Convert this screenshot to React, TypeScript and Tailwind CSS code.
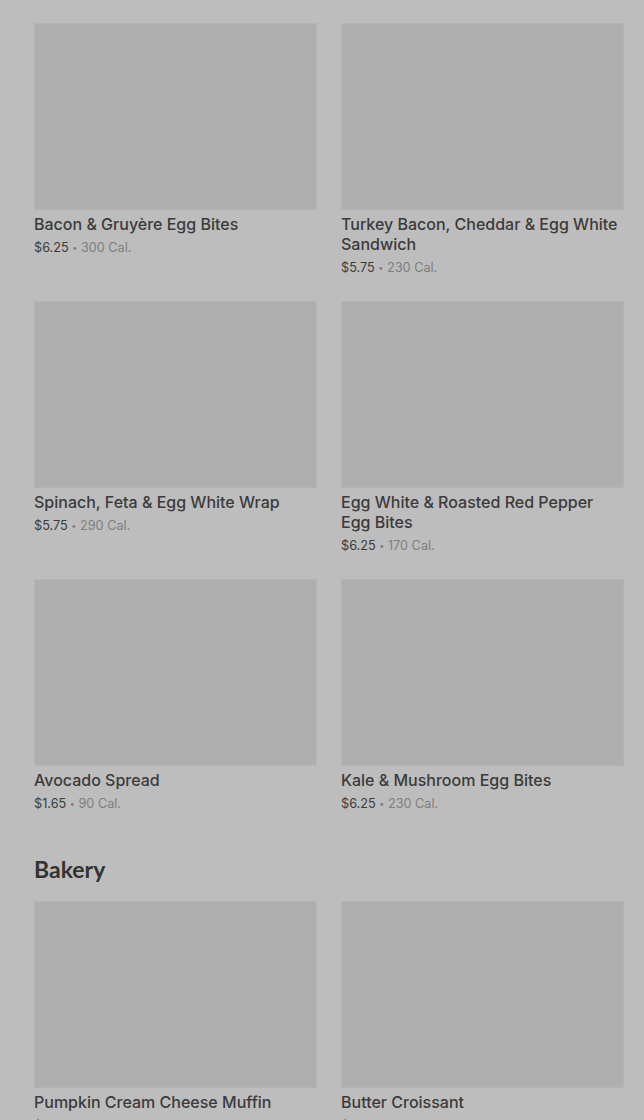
import React from 'react';

type Item = { name: string; price: string; cal: string };

const breakfast: Item[] = [
  { name: 'Bacon & Gruyère Egg Bites', price: '$6.25', cal: '300 Cal.' },
  { name: 'Turkey Bacon, Cheddar & Egg White Sandwich', price: '$5.75', cal: '230 Cal.' },
  { name: 'Spinach, Feta & Egg White Wrap', price: '$5.75', cal: '290 Cal.' },
  { name: 'Egg White & Roasted Red Pepper Egg Bites', price: '$6.25', cal: '170 Cal.' },
  { name: 'Avocado Spread', price: '$1.65', cal: '90 Cal.' },
  { name: 'Kale & Mushroom Egg Bites', price: '$6.25', cal: '230 Cal.' },
];

const bakery: Item[] = [
  { name: 'Pumpkin Cream Cheese Muffin', price: '$3.45', cal: '350 Cal.' },
  { name: 'Butter Croissant', price: '$3.25', cal: '260 Cal.' },
];

const Card: React.FC<{ item: Item }> = ({ item }) => (
  <div className="flex flex-col">
    <div className="h-[187px] w-full bg-[#afafaf] border border-[#b4b4b4]" />
    <h3 className="mt-[4px] text-[16px] leading-[20px] font-medium text-[#3b3b3b]">
      {item.name}
    </h3>
    <p className="mt-[4px] text-[12.7px] leading-[20px] text-[#3b3b3b]">
      {item.price}
      <span className="text-[#7d7d7d]">
        {' '}
        <span className="text-[9px] align-[1px]">•</span> {item.cal}
      </span>
    </p>
  </div>
);

export default function App() {
  return (
    <div
      className="min-h-[1120px] bg-[#bdbdbd] pl-[34px] pr-[20px] pt-[23px] overflow-hidden"
      style={{ fontFamily: 'Inter, "Noto Sans", sans-serif' }}
    >
      <div className="grid grid-cols-2 gap-x-[24px] gap-y-[23px]">
        {breakfast.map((item, idx) => (
          <Card key={idx} item={item} />
        ))}
      </div>

      <h2
        className="mt-[39px] mb-[16px] text-[23px] leading-[32px] font-bold text-[#333333]"
        style={{ fontFamily: 'Lato, "Open Sans", sans-serif' }}
      >
        Bakery
      </h2>

      <div className="grid grid-cols-2 gap-x-[24px] gap-y-[23px]">
        {bakery.map((item, idx) => (
          <Card key={idx} item={item} />
        ))}
      </div>
    </div>
  );
}
